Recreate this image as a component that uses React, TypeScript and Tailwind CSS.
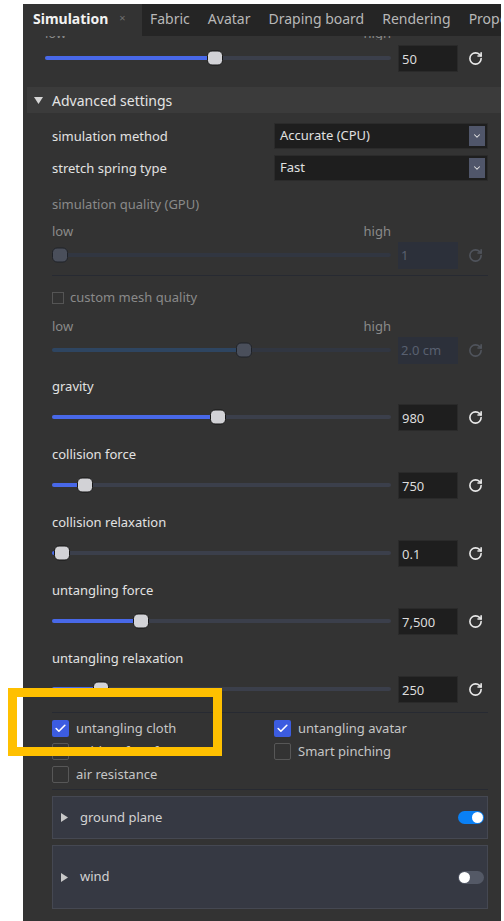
import { RotateCw, ChevronDown, Check } from "lucide-react";

type SliderProps = {
  p: number;
  value: string;
  disabled?: boolean;
};

function Slider({ p, value, disabled }: SliderProps) {
  return (
    <div className="flex items-center h-[28px]">
      <div
        className={`relative flex-1 h-[4px] rounded-full ${
          disabled ? "bg-[#313641]" : "bg-[#3b3f4b]"
        }`}
      >
        <div
          className={`absolute left-0 top-0 h-full rounded-full ${
            disabled ? "bg-[#2e4561]" : "bg-[#4868e8]"
          }`}
          style={{ width: `calc(8px + ${p} * (100% - 16px))` }}
        />
        <div
          className={`absolute top-1/2 -translate-y-1/2 w-[16px] h-[15px] rounded-[5px] border ${
            disabled
              ? "bg-[#4a4f5b] border-[#1f2228]"
              : "bg-[#d2d2d6] border-[#151515]"
          }`}
          style={{ left: `calc(${p} * (100% - 16px))` }}
        />
      </div>
      <div
        className={`ml-[7px] w-[60px] h-[27px] pl-[3px] text-[13px] leading-[27px] ${
          disabled
            ? "bg-[#2c303a] text-[#596070]"
            : "bg-[#1e1e1e] border border-[#2a2a2a] leading-[25px] text-[#dcdcdc]"
        }`}
      >
        {value}
      </div>
      <div className="w-[30px] pl-[4px] flex justify-center">
        <RotateCw
          size={15}
          strokeWidth={2.6}
          color={disabled ? "#50545c" : "#e8e8e8"}
        />
      </div>
    </div>
  );
}

function LowHigh() {
  return (
    <div className="flex justify-between pr-[97px] h-[18px] leading-[18px] text-[13px] text-[#8a8a8a]">
      <span>low</span>
      <span>high</span>
    </div>
  );
}

function Group({ label, p, value }: { label: string; p: number; value: string }) {
  return (
    <div className="h-[68px]">
      <div className="h-[18px] leading-[18px] text-[13px] text-[#e2e2e2]">{label}</div>
      <div className="mt-[8px]">
        <Slider p={p} value={value} />
      </div>
    </div>
  );
}

function SelectRow({ label, value }: { label: string; value: string }) {
  return (
    <div className="flex items-center">
      <span className="flex-1 translate-y-[1px] text-[13px] text-[#e2e2e2]">{label}</span>
      <div className="w-[214px] h-[26px] bg-[#1e1e1e] border border-[#2b2b2b] flex items-center pl-[5px] pr-[2px] text-[13px] text-[#e0e0e0]">
        <span>{value}</span>
        <div className="ml-auto w-[16px] h-[20px] bg-[#50566a] flex items-center justify-center">
          <ChevronDown size={10} strokeWidth={2.5} color="#e6e6e6" />
        </div>
      </div>
    </div>
  );
}

function Box({ label, checked }: { label: string; checked?: boolean }) {
  return (
    <div className="flex items-center h-[23px] gap-[7px] text-[13px] text-[#c6c6c6]">
      <div
        className={`w-[17px] h-[17px] rounded-[2px] flex items-center justify-center ${
          checked ? "bg-[#3c5ce0]" : "border-[1.5px] border-[#575757]"
        }`}
      >
        {checked && <Check size={13} strokeWidth={3} color="#ffffff" />}
      </div>
      <span>{label}</span>
    </div>
  );
}

function Toggle({ on }: { on?: boolean }) {
  return (
    <div
      className={`w-[26px] h-[13px] rounded-full flex items-center px-[1px] ${
        on ? "bg-[#0a80f5] justify-end" : "bg-[#545966] justify-start"
      }`}
    >
      <div className="w-[11px] h-[11px] rounded-full bg-white" />
    </div>
  );
}

function Fold({ label, on, tall }: { label: string; on?: boolean; tall?: boolean }) {
  return (
    <div
      className={`flex items-center border border-[#454852] bg-[#363943] pl-[8px] pr-[3px] ${
        tall ? "h-[64px]" : "h-[43px]"
      }`}
    >
      <svg width="7" height="9" viewBox="0 0 7 9">
        <path d="M0 0 L7 4.5 L0 9 Z" fill="#c8c8c8" />
      </svg>
      <span className="ml-[12px] text-[13px] text-[#d2d2d2]">{label}</span>
      <div className="ml-auto">
        <Toggle on={on} />
      </div>
    </div>
  );
}

const tabs = ["Fabric", "Avatar", "Draping board", "Rendering", "Property"];

export default function App() {
  return (
    <div className="relative min-h-screen bg-white pl-[23px] pt-[4px] font-['Noto_Sans',sans-serif]">
      <div className="h-[917px] mr-[3px] bg-[#333333] overflow-hidden">
        {/* tab strip */}
        <div className="flex h-[32px] bg-[#252525] whitespace-nowrap text-[14px] overflow-hidden">
          <div className="w-[119px] shrink-0 bg-[#333333] flex items-center pl-[10px] pb-[4px]">
            <span className="font-bold text-[#f2f2f2]">Simulation</span>
            <span className="ml-[11px] text-[11px] text-[#6f6f6f]">×</span>
          </div>
          {tabs.map((t) => (
            <div key={t} className="shrink-0 flex items-center pl-[8px] pr-[10px] pb-[4px] text-[#b8b8b8]">
              {t}
            </div>
          ))}
        </div>

        <div className="pl-[4px]">
          {/* basic slider, scrolled half out of view */}
          <div className="pl-[18px] pr-[13px]">
            <div className="h-[4px] overflow-hidden">
              <div className="-mt-[12px]">
                <LowHigh />
              </div>
            </div>
            <div className="mt-[4px]">
              <Slider p={0.49} value="50" />
            </div>
          </div>

          {/* advanced header */}
          <div className="mt-[15px] h-[26px] bg-[#3b3b3b] flex items-center pl-[7px]">
            <svg width="9" height="7" viewBox="0 0 9 7">
              <path d="M0 0 L9 0 L4.5 7 Z" fill="#d6d6d6" />
            </svg>
            <span className="ml-[9px] text-[14px] text-[#e4e4e4]">Advanced settings</span>
          </div>

          <div className="pl-[25px] pr-[13px]">
            <div className="mt-[10px]">
              <SelectRow label="simulation method" value="Accurate (CPU)" />
            </div>
            <div className="mt-[6px]">
              <SelectRow label="stretch spring type" value="Fast" />
            </div>

            <div className="mt-[14px] h-[18px] leading-[18px] text-[13px] text-[#8a8a8a]">
              simulation quality (GPU)
            </div>
            <div className="mt-[9px]">
              <LowHigh />
            </div>
            <div className="mt-[1px]">
              <Slider p={0} value="1" disabled />
            </div>
            <div className="mt-[6px] h-px bg-[#272a32]" />

            <div className="mt-[13px] flex items-center h-[18px] gap-[6px] text-[13px] text-[#8a8a8a]">
              <div className="w-[12px] h-[12px] border border-[#555555]" />
              <span>custom mesh quality</span>
            </div>
            <div className="mt-[10px]">
              <LowHigh />
            </div>
            <div className="mt-[1px]">
              <Slider p={0.57} value="2.0 cm" disabled />
            </div>

            <div className="mt-[13px]">
              <Group label="gravity" p={0.49} value="980" />
              <Group label="collision force" p={0.077} value="750" />
              <Group label="collision relaxation" p={0.005} value="0.1" />
              <Group label="untangling force" p={0.25} value="7,500" />
              <Group label="untangling relaxation" p={0.127} value="250" />
            </div>

            <div className="-mt-[5px] h-px bg-[#272a32]" />

            <div className="mt-[4px] flex">
              <div className="w-[222px]">
                <Box label="untangling cloth" checked />
                <Box label="Fold surface force" />
                <Box label="air resistance" />
              </div>
              <div>
                <Box label="untangling avatar" checked />
                <Box label="Smart pinching" />
              </div>
            </div>
            <div className="mt-[3px] h-px bg-[#272a32]" />

            <div className="mt-[6px]">
              <Fold label="ground plane" on />
            </div>
            <div className="mt-[6px]">
              <Fold label="wind" tall />
            </div>
          </div>
        </div>
      </div>

      {/* highlight frame */}
      <div className="absolute left-[8px] top-[688px] w-[214px] h-[68px] border-[9px] border-[#ffc000]" />
    </div>
  );
}
